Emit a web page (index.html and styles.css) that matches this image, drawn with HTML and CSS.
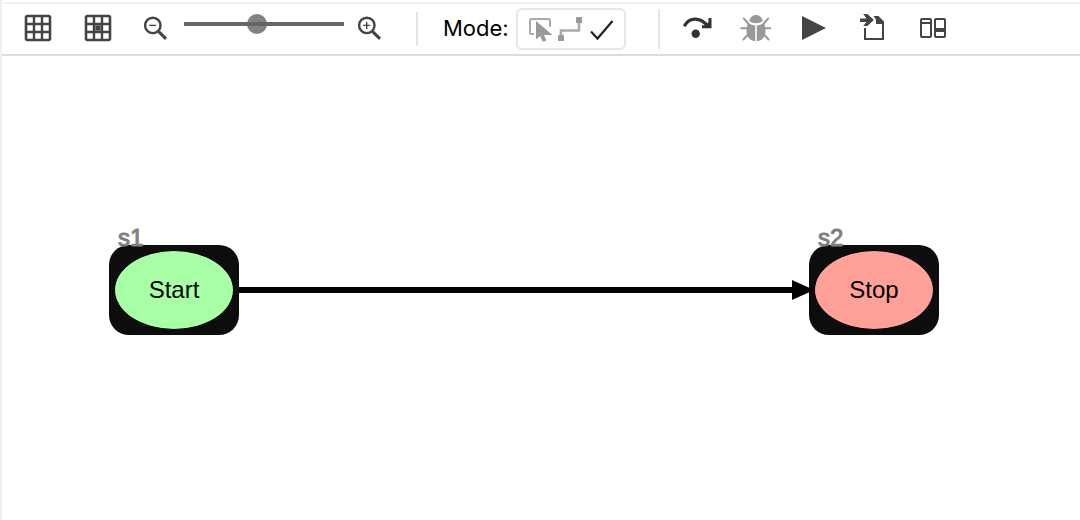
FILE: index.html
```html
<!DOCTYPE html>
<html lang="en">
<head>
<meta charset="utf-8">
<title>Workflow editor</title>
<link rel="stylesheet" href="styles.css">
</head>
<body>
<div class="editor">
  <header class="toolbar">
    <div class="group group-view">
      <button class="tool" type="button" aria-label="Show grid">
        <svg viewBox="0 0 28 28"><rect x="2" y="2" width="24" height="24" rx="1.5" fill="none" stroke="#444" stroke-width="2.6"/><path d="M10 2v24M18 2v24M2 10h24M2 18h24" stroke="#444" stroke-width="2.4"/></svg>
      </button>
      <button class="tool" type="button" aria-label="Snap to grid">
        <svg viewBox="0 0 28 28"><rect x="2" y="2" width="24" height="24" rx="1.5" fill="none" stroke="#444" stroke-width="2.6"/><path d="M10 2v24M18 2v24M2 10h24M2 18h24" stroke="#444" stroke-width="2.4"/><rect x="10" y="10" width="8" height="8" fill="#444"/><rect x="11.5" y="11.5" width="5" height="5" fill="none" stroke="#777" stroke-width="1"/></svg>
      </button>
    </div>
    <div class="group group-zoom">
      <button class="tool" type="button" aria-label="Zoom out">
        <svg viewBox="0 0 28 28"><g fill="none" stroke="#444"><circle cx="9.800" cy="10.400" r="7.700" stroke-width="2.400"/><path d="M15.700 16.600l7.300 7.300" stroke-width="3"/><path d="M6.200 10.400h7" stroke-width="1.400"/></g></svg>
      </button>
      <input class="zoom" type="range" min="0" max="100" value="45" aria-label="Zoom">
      <button class="tool" type="button" aria-label="Zoom in">
        <svg viewBox="0 0 28 28"><g fill="none" stroke="#444"><circle cx="9.800" cy="10.400" r="7.700" stroke-width="2.400"/><path d="M15.700 16.600l7.300 7.300" stroke-width="3"/><path d="M6.200 10.400h7M9.700 6.900v7" stroke-width="1.400"/></g></svg>
      </button>
    </div>
    <div class="group group-mode">
      <span class="mode-label" id="mode-label">Mode:</span>
      <div class="modes" role="group" aria-labelledby="mode-label">
        <button class="tool" type="button" aria-label="Select">
          <svg viewBox="0 0 28 28"><path d="M7 19H4.500Q3 19 3 17.500V5.500Q3 4 4.500 4H21.500Q23 4 23 5.500V12" fill="none" stroke="#aaa" stroke-width="2"/><path d="M9 6v18.500l4.200-3.600 2.300 5.400q2 .8 3.800-.9l-2.200-5.400h8.400z" fill="#999"/></svg>
        </button>
        <button class="tool" type="button" aria-label="Connect">
          <svg viewBox="0 0 28 28"><path d="M4 20V15.500H22V6" fill="none" stroke="#aaa" stroke-width="2.600"/><rect x="1" y="20" width="6" height="6" rx=".6" fill="#999"/><rect x="19" y="2" width="6" height="6" rx=".6" fill="#999"/></svg>
        </button>
        <button class="tool" type="button" aria-label="Validate">
          <svg viewBox="0 0 28 28"><path d="M4 16.500L10.500 23.500L25.500 6" fill="none" stroke="#222" stroke-width="2.200"/></svg>
        </button>
      </div>
    </div>
    <div class="group group-run">
      <button class="tool" type="button" aria-label="Step over">
        <svg viewBox="0 0 32 32"><path d="M4.300 14.300C8.500 5.500 19.500 4 27.500 13.800" fill="none" stroke="#333" stroke-width="3.200"/><path d="M22 16.200V13.200H25.500L28.500 10V6H31.500V16.200z" fill="#333"/><circle cx="15.700" cy="21.800" r="4.200" fill="#333"/></svg>
      </button>
      <button class="tool" type="button" aria-label="Debug">
        <svg viewBox="-1 0 32 32"><path d="M9.200 9.200C10.500 1 21.500 1 22.800 9.200Q16 13.500 9.200 9.200z" fill="#999"/><path d="M8.300 10.800Q11 13.200 15.200 13.500V29.200C5.500 28.500 5 17 8.300 10.800zM23.700 10.800Q21 13.200 16.800 13.500V29.200C26.500 28.500 27 17 23.700 10.800z" fill="#999"/><path d="M3.300 5.800l5.400 6.200M28.700 5.800l-5.400 6.200M.5 16.300H8M31.500 16.300H24M3 28l6-6.700M29 28l-6-6.700" stroke="#999" stroke-width="2" fill="none"/></svg>
      </button>
      <button class="tool" type="button" aria-label="Run">
        <svg viewBox="0 0 32 32"><path d="M4 4L28 16L4 28z" fill="#444"/></svg>
      </button>
      <button class="tool" type="button" aria-label="Import">
        <svg viewBox="0 0 32 32"><path d="M3 6.400H9.500L6.200 2H10.500L16.800 8L10.500 14H6.200L9.500 9.900H3z" fill="#444"/><path d="M8 16V27H26V11" fill="none" stroke="#444" stroke-width="2"/><path d="M16.500 4H21.500L27 9.500V12H19V7.500z" fill="#444"/></svg>
      </button>
      <button class="tool" type="button" aria-label="Layout">
        <svg viewBox="0 0 32 32"><g fill="none" stroke="#444" stroke-width="2"><rect x="5" y="7" width="10" height="18" rx="1"/><path d="M5 11h10"/><rect x="19" y="7" width="10" height="18" rx="1"/></g><path d="M19 16h10v4H19z" fill="#444"/></svg>
      </button>
    </div>
  </header>
  <main class="canvas">
    <svg class="edge" viewBox="0 0 574 20" aria-hidden="true"><path d="M0 10H556" stroke="#000" stroke-width="6"/><path d="M553 0L574 9.500V10.500L553 20z"/></svg>
    <div class="node node-start"><span class="node-id">s1</span><span class="node-shape">Start</span></div>
    <div class="node node-stop"><span class="node-id">s2</span><span class="node-shape">Stop</span></div>
  </main>
</div>
</body>
</html>
```
FILE: styles.css
```css
* {
  box-sizing: border-box;
}

body {
  margin: 0;
  background: #fff;
}

.editor {
  display: flex;
  flex-direction: column;
  min-height: 100vh;
  padding-top: 2px;
  border-left: 2px solid #f0f0f0;
}

.toolbar {
  display: flex;
  align-items: center;
  min-height: 54px;
  padding: 0 20px;
  border-top: 2px solid #f2f2f2;
  border-bottom: 2px solid #dcdcdc;
}

.group {
  display: flex;
  align-items: center;
  flex: none;
}

.tool {
  flex: none;
  width: 32px;
  height: 32px;
  padding: 2px;
  border: 0;
  background: none;
}

.tool svg {
  display: block;
  width: 100%;
  height: 100%;
}

.group-view {
  gap: 28px;
  padding-bottom: 2px;
}

.group-zoom {
  gap: 10px;
  height: 34px;
  margin-left: 27px;
  padding-right: 29px;
  border-right: 2px solid #e4e4e4;
}

.zoom {
  appearance: none;
  width: 162px;
  height: 20px;
  margin: 0 0 10px;
  background: linear-gradient(#666, #666) center / 160px 4px no-repeat;
}

.zoom::-webkit-slider-thumb {
  appearance: none;
  width: 20px;
  height: 20px;
  border-radius: 50%;
  background: linear-gradient(#666, #666) center / 20px 4px no-repeat #828282;
}

.group-mode {
  gap: 7px;
  height: 40px;
  margin-left: 25px;
  padding-right: 32px;
  border-right: 2px solid #e4e4e4;
}

.mode-label {
  width: 66px;
  padding-bottom: 2px;
  font: 22px/28px Inter, sans-serif;
  color: #000;
  white-space: nowrap;
}

.modes {
  display: flex;
  align-items: center;
  height: 42px;
  padding: 0 8px;
  border: 2px solid #e6e6e6;
  border-radius: 6px;
}

.modes .tool {
  width: 30px;
  height: 30px;
  padding: 1px;
}

.group-run {
  gap: 27px;
  margin-left: 20px;
  padding-bottom: 2px;
}

.group-run .tool {
  padding: 0;
}

.canvas {
  position: relative;
  flex: 1;
  font: 24px/28px "Liberation Sans", Arial, sans-serif;
}

.node {
  position: absolute;
  top: 189px;
  width: 130px;
  height: 90px;
  padding: 5px;
  border-radius: 20px;
  background: #0d0d0d;
}

.node-start {
  left: 107px;
}

.node-stop {
  left: 807px;
}

.node-id {
  position: absolute;
  top: -21px;
  left: 9px;
  color: #808080;
  -webkit-text-stroke: 1px #808080;
}

.node-shape {
  display: flex;
  align-items: center;
  justify-content: center;
  height: 100%;
  border: 1px solid #000;
  border-radius: 50%;
  color: #000;
}

.node-start .node-shape {
  background: #a9ffa6;
}

.node-stop .node-shape {
  background: #ffa199;
}

.edge {
  position: absolute;
  top: 224px;
  left: 237px;
  width: 574px;
  height: 20px;
  z-index: 1;
}
```
